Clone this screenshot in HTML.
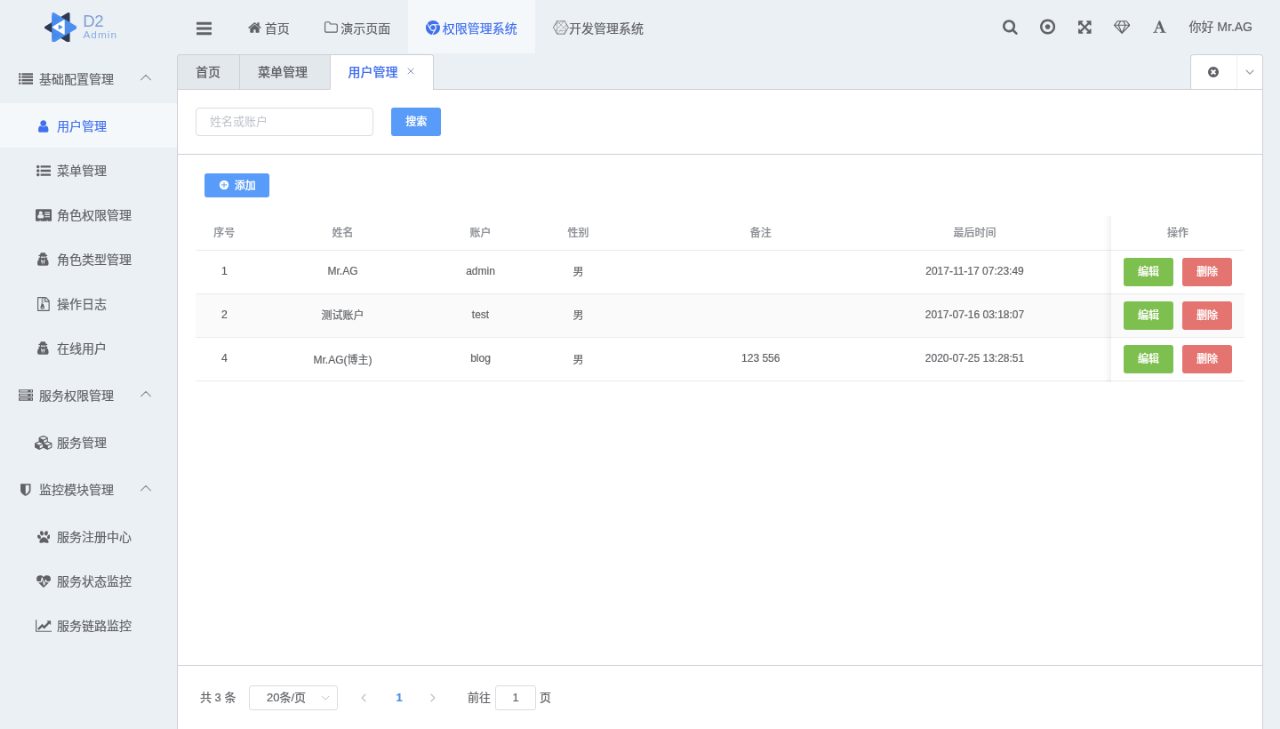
<!DOCTYPE html>
<html lang="zh-CN">
<head>
<meta charset="utf-8">
<title>D2Admin - 用户管理</title>
<style>
*{box-sizing:border-box}
html,body{margin:0;padding:0;width:1280px;height:729px;overflow:hidden;background:#ebf0f5}
body{position:relative}
#stage{position:absolute;left:0;top:0;width:1440px;height:820px;transform:scale(0.888889);transform-origin:0 0;font-family:"Liberation Sans","Noto Sans CJK SC",sans-serif;font-size:14px;color:#606266;overflow:hidden;will-change:transform;filter:blur(0.35px)}
svg.fa{display:inline-block;fill:currentColor;vertical-align:-0.143em;flex:none}
svg.chev,svg.x{display:inline-block;flex:none}
ul{list-style:none;margin:0;padding:0}
/* header */
.hd{position:absolute;left:0;top:0;width:1440px;height:60px}
.logo{position:absolute;left:0;top:0;width:200px;height:60px}
.logo-mark{position:absolute;left:49.5px;top:13.6px;width:36.9px;height:33.8px}
.logo-d2{position:absolute;left:93.3px;top:13px;font-size:18.6px;line-height:21px;color:#7f9fd3;letter-spacing:-0.45px}
.logo-admin{position:absolute;left:93.5px;top:32px;font-size:11.8px;line-height:14px;color:#8aace0;letter-spacing:1px}
.toggle{position:absolute;left:199.5px;top:0;width:60px;height:60px;display:flex;align-items:center;justify-content:center;color:#606266}
.toggle svg{margin-top:4px}
.hmenu{position:absolute;left:260.5px;top:0;height:60px;display:flex}
.hi{height:60px;line-height:60px;padding:3px 20px 0;font-size:14px;color:#606266;white-space:nowrap;display:flex;align-items:center}
.hi svg{margin-right:2.5px;position:relative;top:-0.5px}
.hi svg.nm{margin-right:0.4px}
.hi svg.sl{margin-left:-1.2px;margin-right:3.7px}
.hi.on{color:#4070ee;background:rgba(255,255,255,.5)}
.hr{position:absolute;right:19px;top:0;height:60px;display:flex;align-items:center;color:#606266}
.hb{display:flex;align-items:center;justify-content:center;width:42px;height:46px}
.hu{padding:14px 12px;font-size:14px;line-height:18px;white-space:nowrap}
/* aside */
.as{position:absolute;left:0;top:60px;width:200px;bottom:0}
.st,.si{position:relative;font-size:14px;color:#606266;white-space:nowrap}
.st{height:56px;line-height:56px;padding:1.3px 0 0 20px}
.si{height:50px;line-height:50px;padding:1.3px 0 0 40px}
.st i,.si i{display:inline-flex;justify-content:center;width:18px;margin-right:2px;font-style:normal;line-height:1;position:relative;top:0.6px;vertical-align:-0.143em}
.st i svg,.si i svg{vertical-align:top}
.si.on{color:#4070ee;background:rgba(255,255,255,.5)}
.st .arr{position:absolute;left:157px;top:20px;color:#8a8d94}
/* main */
.main{position:absolute;left:199px;top:60px;right:0;bottom:0}
.tabs{position:absolute;left:0;top:0;right:19.4px;height:41px;border-bottom:1px solid #cdd0d6}
.tnav{position:absolute;left:0;top:0.8px;height:40.2px;display:flex;border:1px solid #cdd0d6;border-bottom:none;border-radius:4px 4px 0 0;overflow:hidden}
.tab{height:39.2px;line-height:38px;padding:0 20px;font-size:14px;font-weight:500;color:#606266;background:rgba(0,0,0,.03);border-left:1px solid #cdd0d6;border-bottom:1px solid #cdd0d6;white-space:nowrap;display:flex;align-items:center}
.tab.first{border-left:none;padding-right:21px}
.tab.closable{padding-right:24.5px}
.tab.on{color:#4070ee;background:#fff;border-bottom-color:#fff}
.tab svg.x{color:#8494c4;position:relative;left:2px;top:-0.5px}
.tbtn{position:absolute;right:0;top:1px;height:39px;display:flex;background:#fff;border:1px solid #cdd0d6;border-bottom:none;border-radius:4px 4px 0 0;color:#606266}
.tb1{width:52.5px;height:38px;padding-right:0.8px;display:flex;align-items:center;justify-content:center;border-right:1px solid #ebeef5}
.tb2{width:27.2px;height:38px;padding:0.8px 1px 0 0;display:flex;align-items:center;justify-content:center;color:#9a9da3}
.box{position:absolute;left:0;top:41px;right:18.8px;bottom:0;background:#fff;border-left:1px solid #cdd0d6;border-right:1px solid #cdd0d6}
.bh{position:absolute;left:0;top:0;right:0;height:73px;border-bottom:1px solid #cdd0d6}
.inp{position:absolute;left:20.1px;top:20px;width:200px;height:32px;line-height:30px;border:1px solid #dcdde2;border-radius:4px;padding:0 15px;font-size:13px;color:#c0c4cc;background:#fff}
.btn{display:inline-flex;align-items:center;justify-content:center;color:#fff;font-weight:500;border-radius:3px;font-size:12px;line-height:1;white-space:nowrap}
.btn.pri{background:#589bf8}
.btn.ok{background:#7ec050}
.btn.no{background:#e47470}
.btn.sm{position:absolute;left:240.3px;top:20px;width:56px;height:32px}
.btn.mini{width:73px;height:27.6px}
.btn.mini svg.pc{width:12px;height:12px;margin-right:5.4px;flex:none;position:relative;top:-0.2px}
.btn.mini span{position:relative;top:0.9px;left:0.3px}
.bb{position:absolute;left:0;top:73px;right:0;bottom:73px}
.addrow{position:absolute;left:30.3px;top:20.8px}
.tbl{position:absolute;left:20px;top:67px;width:1180px;border-collapse:collapse;table-layout:fixed;font-size:12px;color:#606266}
.tbl th{height:40px;padding:0;font-weight:500;color:#909399;text-align:center;border-bottom:1px solid #ececef}
.tbl td{height:49.25px;padding:0;text-align:center;border-bottom:1px solid #ececef}
.tbl tr.r1 td{background:#fafafa}
.tbl .c0{width:65.5px;padding-right:1px !important}.tbl .c1{width:200px}.tbl .c2{width:110px}.tbl .c3{width:110px}.tbl .c4{width:300.5px}.tbl .c5{width:181px}.tbl .cx{width:63px}.tbl .c6{width:150px}
.tbl td>span.t{position:relative;top:-1px}
.tbl td .btn{width:56px;height:32px;vertical-align:middle;position:relative;top:0.3px}
.tbl td .btn+.btn{margin-left:10px}
.fixshadow{position:absolute;left:1041px;top:69px;width:9px;height:186.5px;background:linear-gradient(to right,rgba(0,0,0,0),rgba(0,0,0,.02) 45%,rgba(0,0,0,.055))}
.bf{position:absolute;left:0;bottom:0;right:0;height:72px;border-top:1px solid #cdd0d6;font-size:13px;color:#606266}
.bf>span{position:absolute;top:22px;height:28px;line-height:28px;white-space:nowrap}
.pt{left:25px}
.ps{left:80px;width:100px;border:1px solid #dcdde2;border-radius:3px;text-align:center;padding-right:16px;line-height:26px !important}
.ps svg{position:absolute;right:7px;top:7px}
.pp{left:203px;width:12px;color:#c0c4cc;display:flex;align-items:center}
.pn{left:241px;width:16px;text-align:center;color:#4d8fe6;font-weight:700}
.px{left:281px;width:12px;color:#c0c4cc;display:flex;align-items:center}
.pj{left:326px}
.pe{display:inline-block;width:46px;height:28px;line-height:26px;border:1px solid #dcdde2;border-radius:3px;text-align:center;margin:0 4px 0 5px;vertical-align:top}

/* weight compensation for heavier source rendering */
.tab{-webkit-text-stroke:0.12px currentColor}
.btn,.tbl th{-webkit-text-stroke:0.22px currentColor}
.st,.si,.hi,.hu,.tbl td,.bf,.pt{-webkit-text-stroke:0.18px currentColor}

</style>
</head>
<body>
<div id="stage">
<div class="hd">
<div class="logo">
<svg class="logo-mark" viewBox="0 0 100 91.7" aria-hidden="true">
<polygon points="4.5,45.85 72.9,4.5 72.9,87.2" fill="#2e3a53" stroke="#2e3a53" stroke-width="9" stroke-linejoin="round"/>
<polygon points="95.5,45.85 27.1,4.5 27.1,87.2" fill="#4c8ff0" stroke="#4c8ff0" stroke-width="9" stroke-linejoin="round"/>
<polygon points="22.6,8 22.6,35 47,21.5" fill="#4489ec"/>
<polygon points="22.6,83.7 22.6,56.7 47,70.2" fill="#4489ec"/>
<polygon points="25,44.6 60,23.5 60,65.7" fill="#ffffff" stroke="#ffffff" stroke-width="3" stroke-linejoin="round"/>
<polygon points="43.5,38 43.5,51.2 55,44.6" fill="#4c8ff0" stroke="#4c8ff0" stroke-width="2" stroke-linejoin="round"/>
</svg>
<span class="logo-d2">D2</span><span class="logo-admin">Admin</span>
</div>
<div class="toggle"><svg class="fa " style="width:17.14px;height:20px;" viewBox="0 -1536 1536 1792" aria-hidden="true"><path transform="scale(1,-1)" d="M1536 192v-128q0 -26 -19 -45t-45 -19h-1408q-26 0 -45 19t-19 45v128q0 26 19 45t45 19h1408q26 0 45 -19t19 -45zM1536 704v-128q0 -26 -19 -45t-45 -19h-1408q-26 0 -45 19t-19 45v128q0 26 19 45t45 19h1408q26 0 45 -19t19 -45zM1536 1216v-128q0 -26 -19 -45
t-45 -19h-1408q-26 0 -45 19t-19 45v128q0 26 19 45t45 19h1408q26 0 45 -19t19 -45z"/></svg></div>
<ul class="hmenu">
<li class="hi"><svg class="fa sl" style="width:14.86px;height:16px;" viewBox="0 -1536 1664 1792" aria-hidden="true"><path transform="scale(1,-1)" d="M1408 544v-480q0 -26 -19 -45t-45 -19h-384v384h-256v-384h-384q-26 0 -45 19t-19 45v480q0 1 0.5 3t0.5 3l575 474l575 -474q1 -2 1 -6zM1631 613l-62 -74q-8 -9 -21 -11h-3q-13 0 -21 7l-692 577l-692 -577q-12 -8 -24 -7q-13 2 -21 11l-62 74q-8 10 -7 23.5t11 21.5
l719 599q32 26 76 26t76 -26l244 -204v195q0 14 9 23t23 9h192q14 0 23 -9t9 -23v-408l219 -182q10 -8 11 -21.5t-7 -23.5z"/></svg><span>首页</span></li>
<li class="hi"><svg class="fa sl" style="width:14.86px;height:16px;" viewBox="0 -1536 1664 1792" aria-hidden="true"><path transform="scale(1,-1)" d="M1536 224v704q0 40 -28 68t-68 28h-704q-40 0 -68 28t-28 68v64q0 40 -28 68t-68 28h-320q-40 0 -68 -28t-28 -68v-960q0 -40 28 -68t68 -28h1216q40 0 68 28t28 68zM1664 928v-704q0 -92 -66 -158t-158 -66h-1216q-92 0 -158 66t-66 158v960q0 92 66 158t158 66h320
q92 0 158 -66t66 -158v-32h672q92 0 158 -66t66 -158z"/></svg><span>演示页面</span></li>
<li class="hi on"><svg class="fa " style="width:16.00px;height:16px;" viewBox="0 -1536 1792 1792" aria-hidden="true"><path transform="scale(1,-1)" d="M893 1536q240 2 451 -120q232 -134 352 -372l-742 39q-160 9 -294 -74.5t-185 -229.5l-276 424q128 159 311 245.5t383 87.5zM146 1131l337 -663q72 -143 211 -217t293 -45l-230 -451q-212 33 -385 157.5t-272.5 316t-99.5 411.5q0 267 146 491zM1732 962
q58 -150 59.5 -310.5t-48.5 -306t-153 -272t-246 -209.5q-230 -133 -498 -119l405 623q88 131 82.5 290.5t-106.5 277.5zM896 942q125 0 213.5 -88.5t88.5 -213.5t-88.5 -213.5t-213.5 -88.5t-213.5 88.5t-88.5 213.5t88.5 213.5t213.5 88.5z"/></svg><span>权限管理系统</span></li>
<li class="hi"><svg class="fa nm" style="width:17.83px;height:15.6px;" viewBox="0 -1536 2048 1792" aria-hidden="true"><path transform="scale(1,-1)" d="M2048 641q0 -21 -13 -36.5t-33 -19.5l-205 -356q3 -9 3 -18q0 -20 -12.5 -35.5t-32.5 -19.5l-193 -337q3 -8 3 -16q0 -23 -16.5 -40t-40.5 -17q-25 0 -41 18h-400q-17 -20 -43 -20t-43 20h-399q-17 -20 -43 -20q-23 0 -40 16.5t-17 40.5q0 8 4 20l-193 335
q-20 4 -32.5 19.5t-12.5 35.5q0 9 3 18l-206 356q-20 5 -32.5 20.5t-12.5 35.5q0 21 13.5 36.5t33.5 19.5l199 344q0 1 -0.5 3t-0.5 3q0 36 34 51l209 363q-4 10 -4 18q0 24 17 40.5t40 16.5q26 0 44 -21h396q16 21 43 21t43 -21h398q18 21 44 21q23 0 40 -16.5t17 -40.5
q0 -6 -4 -18l207 -358q23 -1 39 -17.5t16 -38.5q0 -13 -7 -27l187 -324q19 -4 31.5 -19.5t12.5 -35.5zM1063 -158h389l-342 354h-143l-342 -354h360q18 16 39 16t39 -16zM112 654q1 -4 1 -13q0 -10 -2 -15l208 -360l15 -6l188 199v347l-187 194q-13 -8 -29 -10zM986 1438
h-388l190 -200l554 200h-280q-16 -16 -38 -16t-38 16zM1689 226q1 6 5 11l-64 68l-17 -79h76zM1583 226l22 105l-252 266l-296 -307l63 -64h463zM1495 -142l16 28l65 310h-427l333 -343q8 4 13 5zM578 -158h5l342 354h-373v-335l4 -6q14 -5 22 -13zM552 226h402l64 66
l-309 321l-157 -166v-221zM359 226h163v189l-168 -177q4 -8 5 -12zM358 1051q0 -1 0.5 -2t0.5 -2q0 -16 -8 -29l171 -177v269zM552 1121v-311l153 -157l297 314l-223 236zM556 1425l-4 -8v-264l205 74l-191 201q-6 -2 -10 -3zM1447 1438h-16l-621 -224l213 -225zM1023 946
l-297 -315l311 -319l296 307zM688 634l-136 141v-284zM1038 270l-42 -44h85zM1374 618l238 -251l132 624l-3 5l-1 1zM1718 1018q-8 13 -8 29v2l-216 376q-5 1 -13 5l-437 -463l310 -327zM522 1142v223l-163 -282zM522 196h-163l163 -283v283zM1607 196l-48 -227l130 227h-82
zM1729 266l207 361q-2 10 -2 14q0 1 3 16l-171 296l-129 -612l77 -82q5 3 15 7z"/></svg><span>开发管理系统</span></li>
</ul>
<div class="hr">
<span class="hb"><svg class="fa " style="width:16.71px;height:18px;" viewBox="0 -1536 1664 1792" aria-hidden="true"><path transform="scale(1,-1)" d="M1152 704q0 185 -131.5 316.5t-316.5 131.5t-316.5 -131.5t-131.5 -316.5t131.5 -316.5t316.5 -131.5t316.5 131.5t131.5 316.5zM1664 -128q0 -52 -38 -90t-90 -38q-54 0 -90 38l-343 342q-179 -124 -399 -124q-143 0 -273.5 55.5t-225 150t-150 225t-55.5 273.5
t55.5 273.5t150 225t225 150t273.5 55.5t273.5 -55.5t225 -150t150 -225t55.5 -273.5q0 -220 -124 -399l343 -343q37 -37 37 -90z"/></svg></span>
<span class="hb"><svg class="fa " style="width:17.14px;height:20px;" viewBox="0 -1536 1536 1792" aria-hidden="true"><path transform="scale(1,-1)" d="M1024 640q0 -106 -75 -181t-181 -75t-181 75t-75 181t75 181t181 75t181 -75t75 -181zM768 1184q-148 0 -273 -73t-198 -198t-73 -273t73 -273t198 -198t273 -73t273 73t198 198t73 273t-73 273t-198 198t-273 73zM1536 640q0 -209 -103 -385.5t-279.5 -279.5
t-385.5 -103t-385.5 103t-279.5 279.5t-103 385.5t103 385.5t279.5 279.5t385.5 103t385.5 -103t279.5 -279.5t103 -385.5z"/></svg></span>
<span class="hb"><svg class="fa " style="width:14.57px;height:17px;" viewBox="0 -1536 1536 1792" aria-hidden="true"><path transform="scale(1,-1)" d="M1283 995l-355 -355l355 -355l144 144q29 31 70 14q39 -17 39 -59v-448q0 -26 -19 -45t-45 -19h-448q-42 0 -59 40q-17 39 14 69l144 144l-355 355l-355 -355l144 -144q31 -30 14 -69q-17 -40 -59 -40h-448q-26 0 -45 19t-19 45v448q0 42 40 59q39 17 69 -14l144 -144
l355 355l-355 355l-144 -144q-19 -19 -45 -19q-12 0 -24 5q-40 17 -40 59v448q0 26 19 45t45 19h448q42 0 59 -40q17 -39 -14 -69l-144 -144l355 -355l355 355l-144 144q-31 30 -14 69q17 40 59 40h448q26 0 45 -19t19 -45v-448q0 -42 -39 -59q-13 -5 -25 -5q-26 0 -45 19z
"/></svg></span>
<span class="hb"><svg class="fa " style="width:18.29px;height:16px;" viewBox="0 -1536 2048 1792" aria-hidden="true"><path transform="scale(1,-1)" d="M212 768l623 -665l-300 665h-323zM1024 -4l349 772h-698zM538 896l204 384h-262l-288 -384h346zM1213 103l623 665h-323zM683 896h682l-204 384h-274zM1510 896h346l-288 384h-262zM1651 1382l384 -512q14 -18 13 -41.5t-17 -40.5l-960 -1024q-18 -20 -47 -20t-47 20
l-960 1024q-16 17 -17 40.5t13 41.5l384 512q18 26 51 26h1152q33 0 51 -26z"/></svg></span>
<span class="hb"><svg class="fa " style="width:14.86px;height:16px;" viewBox="0 -1536 1664 1792" aria-hidden="true"><path transform="scale(1,-1)" d="M725 977l-170 -450q33 0 136.5 -2t160.5 -2q19 0 57 2q-87 253 -184 452zM0 -128l2 79q23 7 56 12.5t57 10.5t49.5 14.5t44.5 29t31 50.5l237 616l280 724h75h53q8 -14 11 -21l205 -480q33 -78 106 -257.5t114 -274.5q15 -34 58 -144.5t72 -168.5q20 -45 35 -57
q19 -15 88 -29.5t84 -20.5q6 -38 6 -57q0 -5 -0.5 -13.5t-0.5 -12.5q-63 0 -190 8t-191 8q-76 0 -215 -7t-178 -8q0 43 4 78l131 28q1 0 12.5 2.5t15.5 3.5t14.5 4.5t15 6.5t11 8t9 11t2.5 14q0 16 -31 96.5t-72 177.5t-42 100l-450 2q-26 -58 -76.5 -195.5t-50.5 -162.5
q0 -22 14 -37.5t43.5 -24.5t48.5 -13.5t57 -8.5t41 -4q1 -19 1 -58q0 -9 -2 -27q-58 0 -174.5 10t-174.5 10q-8 0 -26.5 -4t-21.5 -4q-80 -14 -188 -14z"/></svg></span>
<span class="hu">你好 Mr.AG</span>
</div>
</div>
<div class="as">
<div class="st"><i><svg class="fa " style="width:16.00px;height:16px;" viewBox="0 -1536 1792 1792" aria-hidden="true"><path transform="scale(1,-1)" d="M256 224v-192q0 -13 -9.5 -22.5t-22.5 -9.5h-192q-13 0 -22.5 9.5t-9.5 22.5v192q0 13 9.5 22.5t22.5 9.5h192q13 0 22.5 -9.5t9.5 -22.5zM256 608v-192q0 -13 -9.5 -22.5t-22.5 -9.5h-192q-13 0 -22.5 9.5t-9.5 22.5v192q0 13 9.5 22.5t22.5 9.5h192q13 0 22.5 -9.5
t9.5 -22.5zM256 992v-192q0 -13 -9.5 -22.5t-22.5 -9.5h-192q-13 0 -22.5 9.5t-9.5 22.5v192q0 13 9.5 22.5t22.5 9.5h192q13 0 22.5 -9.5t9.5 -22.5zM1792 224v-192q0 -13 -9.5 -22.5t-22.5 -9.5h-1344q-13 0 -22.5 9.5t-9.5 22.5v192q0 13 9.5 22.5t22.5 9.5h1344
q13 0 22.5 -9.5t9.5 -22.5zM256 1376v-192q0 -13 -9.5 -22.5t-22.5 -9.5h-192q-13 0 -22.5 9.5t-9.5 22.5v192q0 13 9.5 22.5t22.5 9.5h192q13 0 22.5 -9.5t9.5 -22.5zM1792 608v-192q0 -13 -9.5 -22.5t-22.5 -9.5h-1344q-13 0 -22.5 9.5t-9.5 22.5v192q0 13 9.5 22.5
t22.5 9.5h1344q13 0 22.5 -9.5t9.5 -22.5zM1792 992v-192q0 -13 -9.5 -22.5t-22.5 -9.5h-1344q-13 0 -22.5 9.5t-9.5 22.5v192q0 13 9.5 22.5t22.5 9.5h1344q13 0 22.5 -9.5t9.5 -22.5zM1792 1376v-192q0 -13 -9.5 -22.5t-22.5 -9.5h-1344q-13 0 -22.5 9.5t-9.5 22.5v192
q0 13 9.5 22.5t22.5 9.5h1344q13 0 22.5 -9.5t9.5 -22.5z"/></svg></i> <span>基础配置管理</span><svg class="chev arr" style="width:14px;height:14px;" viewBox="0 0 12 12" aria-hidden="true"><polyline points="1.3,8.4 6,3.7 10.7,8.4" fill="none" stroke="currentColor" stroke-width="0.9" stroke-linecap="round" stroke-linejoin="round"/></svg></div>
<div class="si on"><i><svg class="fa " style="width:11.43px;height:16px;" viewBox="0 -1536 1280 1792" aria-hidden="true"><path transform="scale(1,-1)" d="M1280 137q0 -109 -62.5 -187t-150.5 -78h-854q-88 0 -150.5 78t-62.5 187q0 85 8.5 160.5t31.5 152t58.5 131t94 89t134.5 34.5q131 -128 313 -128t313 128q76 0 134.5 -34.5t94 -89t58.5 -131t31.5 -152t8.5 -160.5zM1024 1024q0 -159 -112.5 -271.5t-271.5 -112.5
t-271.5 112.5t-112.5 271.5t112.5 271.5t271.5 112.5t271.5 -112.5t112.5 -271.5z"/></svg></i> <span>用户管理</span></div>
<div class="si"><i><svg class="fa " style="width:16.00px;height:16px;" viewBox="0 -1536 1792 1792" aria-hidden="true"><path transform="scale(1,-1)" d="M384 128q0 -80 -56 -136t-136 -56t-136 56t-56 136t56 136t136 56t136 -56t56 -136zM384 640q0 -80 -56 -136t-136 -56t-136 56t-56 136t56 136t136 56t136 -56t56 -136zM1792 224v-192q0 -13 -9.5 -22.5t-22.5 -9.5h-1216q-13 0 -22.5 9.5t-9.5 22.5v192q0 13 9.5 22.5
t22.5 9.5h1216q13 0 22.5 -9.5t9.5 -22.5zM384 1152q0 -80 -56 -136t-136 -56t-136 56t-56 136t56 136t136 56t136 -56t56 -136zM1792 736v-192q0 -13 -9.5 -22.5t-22.5 -9.5h-1216q-13 0 -22.5 9.5t-9.5 22.5v192q0 13 9.5 22.5t22.5 9.5h1216q13 0 22.5 -9.5t9.5 -22.5z
M1792 1248v-192q0 -13 -9.5 -22.5t-22.5 -9.5h-1216q-13 0 -22.5 9.5t-9.5 22.5v192q0 13 9.5 22.5t22.5 9.5h1216q13 0 22.5 -9.5t9.5 -22.5z"/></svg></i> <span>菜单管理</span></div>
<div class="si"><i><svg class="fa " style="width:18.29px;height:16px;" viewBox="0 -1536 2048 1792" aria-hidden="true"><path transform="scale(1,-1)" d="M1024 405q0 64 -9 117.5t-29.5 103t-60.5 78t-97 28.5q-6 -4 -30 -18t-37.5 -21.5t-35.5 -17.5t-43 -14.5t-42 -4.5t-42 4.5t-43 14.5t-35.5 17.5t-37.5 21.5t-30 18q-57 0 -97 -28.5t-60.5 -78t-29.5 -103t-9 -117.5t37 -106.5t91 -42.5h512q54 0 91 42.5t37 106.5z
M867 925q0 94 -66.5 160.5t-160.5 66.5t-160.5 -66.5t-66.5 -160.5t66.5 -160.5t160.5 -66.5t160.5 66.5t66.5 160.5zM1792 416v64q0 14 -9 23t-23 9h-576q-14 0 -23 -9t-9 -23v-64q0 -14 9 -23t23 -9h576q14 0 23 9t9 23zM1792 676v56q0 15 -10.5 25.5t-25.5 10.5h-568
q-15 0 -25.5 -10.5t-10.5 -25.5v-56q0 -15 10.5 -25.5t25.5 -10.5h568q15 0 25.5 10.5t10.5 25.5zM1792 928v64q0 14 -9 23t-23 9h-576q-14 0 -23 -9t-9 -23v-64q0 -14 9 -23t23 -9h576q14 0 23 9t9 23zM2048 1248v-1216q0 -66 -47 -113t-113 -47h-352v96q0 14 -9 23t-23 9
h-64q-14 0 -23 -9t-9 -23v-96h-768v96q0 14 -9 23t-23 9h-64q-14 0 -23 -9t-9 -23v-96h-352q-66 0 -113 47t-47 113v1216q0 66 47 113t113 47h1728q66 0 113 -47t47 -113z"/></svg></i> <span>角色权限管理</span></div>
<div class="si"><i><svg class="fa " style="width:13.71px;height:16px;" viewBox="0 -1536 1536 1792" aria-hidden="true"><path transform="scale(1,-1)" d="M576 0l96 448l-96 128l-128 64zM832 0l128 640l-128 -64l-96 -128zM992 1010q-2 4 -4 6q-10 8 -96 8q-70 0 -167 -19q-7 -2 -21 -2t-21 2q-97 19 -167 19q-86 0 -96 -8q-2 -2 -4 -6q2 -18 4 -27q2 -3 7.5 -6.5t7.5 -10.5q2 -4 7.5 -20.5t7 -20.5t7.5 -17t8.5 -17t9 -14
t12 -13.5t14 -9.5t17.5 -8t20.5 -4t24.5 -2q36 0 59 12.5t32.5 30t14.5 34.5t11.5 29.5t17.5 12.5h12q11 0 17.5 -12.5t11.5 -29.5t14.5 -34.5t32.5 -30t59 -12.5q13 0 24.5 2t20.5 4t17.5 8t14 9.5t12 13.5t9 14t8.5 17t7.5 17t7 20.5t7.5 20.5q2 7 7.5 10.5t7.5 6.5
q2 9 4 27zM1408 131q0 -121 -73 -190t-194 -69h-874q-121 0 -194 69t-73 190q0 61 4.5 118t19 125.5t37.5 123.5t63.5 103.5t93.5 74.5l-90 220h214q-22 64 -22 128q0 12 2 32q-194 40 -194 96q0 57 210 99q17 62 51.5 134t70.5 114q32 37 76 37q30 0 84 -31t84 -31t84 31
t84 31q44 0 76 -37q36 -42 70.5 -114t51.5 -134q210 -42 210 -99q0 -56 -194 -96q7 -81 -20 -160h214l-82 -225q63 -33 107.5 -96.5t65.5 -143.5t29 -151.5t8 -148.5z"/></svg></i> <span>角色类型管理</span></div>
<div class="si"><i><svg class="fa " style="width:13.71px;height:16px;" viewBox="0 -1536 1536 1792" aria-hidden="true"><path transform="scale(1,-1)" d="M640 1152v128h-128v-128h128zM768 1024v128h-128v-128h128zM640 896v128h-128v-128h128zM768 768v128h-128v-128h128zM1468 1156q28 -28 48 -76t20 -88v-1152q0 -40 -28 -68t-68 -28h-1344q-40 0 -68 28t-28 68v1600q0 40 28 68t68 28h896q40 0 88 -20t76 -48zM1024 1400
v-376h376q-10 29 -22 41l-313 313q-12 12 -41 22zM1408 -128v1024h-416q-40 0 -68 28t-28 68v416h-128v-128h-128v128h-512v-1536h1280zM781 593l107 -349q8 -27 8 -52q0 -83 -72.5 -137.5t-183.5 -54.5t-183.5 54.5t-72.5 137.5q0 25 8 52q21 63 120 396v128h128v-128h79
q22 0 39 -13t23 -34zM640 128q53 0 90.5 19t37.5 45t-37.5 45t-90.5 19t-90.5 -19t-37.5 -45t37.5 -45t90.5 -19z"/></svg></i> <span>操作日志</span></div>
<div class="si"><i><svg class="fa " style="width:13.71px;height:16px;" viewBox="0 -1536 1536 1792" aria-hidden="true"><path transform="scale(1,-1)" d="M576 0l96 448l-96 128l-128 64zM832 0l128 640l-128 -64l-96 -128zM992 1010q-2 4 -4 6q-10 8 -96 8q-70 0 -167 -19q-7 -2 -21 -2t-21 2q-97 19 -167 19q-86 0 -96 -8q-2 -2 -4 -6q2 -18 4 -27q2 -3 7.5 -6.5t7.5 -10.5q2 -4 7.5 -20.5t7 -20.5t7.5 -17t8.5 -17t9 -14
t12 -13.5t14 -9.5t17.5 -8t20.5 -4t24.5 -2q36 0 59 12.5t32.5 30t14.5 34.5t11.5 29.5t17.5 12.5h12q11 0 17.5 -12.5t11.5 -29.5t14.5 -34.5t32.5 -30t59 -12.5q13 0 24.5 2t20.5 4t17.5 8t14 9.5t12 13.5t9 14t8.5 17t7.5 17t7 20.5t7.5 20.5q2 7 7.5 10.5t7.5 6.5
q2 9 4 27zM1408 131q0 -121 -73 -190t-194 -69h-874q-121 0 -194 69t-73 190q0 61 4.5 118t19 125.5t37.5 123.5t63.5 103.5t93.5 74.5l-90 220h214q-22 64 -22 128q0 12 2 32q-194 40 -194 96q0 57 210 99q17 62 51.5 134t70.5 114q32 37 76 37q30 0 84 -31t84 -31t84 31
t84 31q44 0 76 -37q36 -42 70.5 -114t51.5 -134q210 -42 210 -99q0 -56 -194 -96q7 -81 -20 -160h214l-82 -225q63 -33 107.5 -96.5t65.5 -143.5t29 -151.5t8 -148.5z"/></svg></i> <span>在线用户</span></div>
<div class="st"><i><svg class="fa " style="width:16.00px;height:16px;" viewBox="0 -1536 1792 1792" aria-hidden="true"><path transform="scale(1,-1)" d="M128 128h1024v128h-1024v-128zM128 640h1024v128h-1024v-128zM1696 192q0 40 -28 68t-68 28t-68 -28t-28 -68t28 -68t68 -28t68 28t28 68zM128 1152h1024v128h-1024v-128zM1696 704q0 40 -28 68t-68 28t-68 -28t-28 -68t28 -68t68 -28t68 28t28 68zM1696 1216
q0 40 -28 68t-68 28t-68 -28t-28 -68t28 -68t68 -28t68 28t28 68zM1792 384v-384h-1792v384h1792zM1792 896v-384h-1792v384h1792zM1792 1408v-384h-1792v384h1792z"/></svg></i> <span>服务权限管理</span><svg class="chev arr" style="width:14px;height:14px;" viewBox="0 0 12 12" aria-hidden="true"><polyline points="1.3,8.4 6,3.7 10.7,8.4" fill="none" stroke="currentColor" stroke-width="0.9" stroke-linecap="round" stroke-linejoin="round"/></svg></div>
<div class="si"><i><svg class="fa " style="width:20.57px;height:16px;" viewBox="0 -1536 2304 1792" aria-hidden="true"><path transform="scale(1,-1)" d="M640 -96l384 192v314l-384 -164v-342zM576 358l404 173l-404 173l-404 -173zM1664 -96l384 192v314l-384 -164v-342zM1600 358l404 173l-404 173l-404 -173zM1152 651l384 165v266l-384 -164v-267zM1088 1030l441 189l-441 189l-441 -189zM2176 512v-416q0 -36 -19 -67
t-52 -47l-448 -224q-25 -14 -57 -14t-57 14l-448 224q-4 2 -7 4q-2 -2 -7 -4l-448 -224q-25 -14 -57 -14t-57 14l-448 224q-33 16 -52 47t-19 67v416q0 38 21.5 70t56.5 48l434 186v400q0 38 21.5 70t56.5 48l448 192q23 10 50 10t50 -10l448 -192q35 -16 56.5 -48t21.5 -70
v-400l434 -186q36 -16 57 -48t21 -70z"/></svg></i> <span>服务管理</span></div>
<div class="st"><i><svg class="fa " style="width:11.43px;height:16px;" viewBox="0 -1536 1280 1792" aria-hidden="true"><path transform="scale(1,-1)" d="M1088 576v640h-448v-1137q119 63 213 137q235 184 235 360zM1280 1344v-768q0 -86 -33.5 -170.5t-83 -150t-118 -127.5t-126.5 -103t-121 -77.5t-89.5 -49.5t-42.5 -20q-12 -6 -26 -6t-26 6q-16 7 -42.5 20t-89.5 49.5t-121 77.5t-126.5 103t-118 127.5t-83 150
t-33.5 170.5v768q0 26 19 45t45 19h1152q26 0 45 -19t19 -45z"/></svg></i> <span>监控模块管理</span><svg class="chev arr" style="width:14px;height:14px;" viewBox="0 0 12 12" aria-hidden="true"><polyline points="1.3,8.4 6,3.7 10.7,8.4" fill="none" stroke="currentColor" stroke-width="0.9" stroke-linecap="round" stroke-linejoin="round"/></svg></div>
<div class="si"><i><svg class="fa " style="width:14.86px;height:16px;" viewBox="0 -1536 1664 1792" aria-hidden="true"><path transform="scale(1,-1)" d="M780 1064q0 -60 -19 -113.5t-63 -92.5t-105 -39q-76 0 -138 57.5t-92 135.5t-30 151q0 60 19 113.5t63 92.5t105 39q77 0 138.5 -57.5t91.5 -135t30 -151.5zM438 581q0 -80 -42 -139t-119 -59q-76 0 -141.5 55.5t-100.5 133.5t-35 152q0 80 42 139.5t119 59.5
q76 0 141.5 -55.5t100.5 -134t35 -152.5zM832 608q118 0 255 -97.5t229 -237t92 -254.5q0 -46 -17 -76.5t-48.5 -45t-64.5 -20t-76 -5.5q-68 0 -187.5 45t-182.5 45q-66 0 -192.5 -44.5t-200.5 -44.5q-183 0 -183 146q0 86 56 191.5t139.5 192.5t187.5 146t193 59zM1071 819
q-61 0 -105 39t-63 92.5t-19 113.5q0 74 30 151.5t91.5 135t138.5 57.5q61 0 105 -39t63 -92.5t19 -113.5q0 -73 -30 -151t-92 -135.5t-138 -57.5zM1503 923q77 0 119 -59.5t42 -139.5q0 -74 -35 -152t-100.5 -133.5t-141.5 -55.5q-77 0 -119 59t-42 139q0 74 35 152.5
t100.5 134t141.5 55.5z"/></svg></i> <span>服务注册中心</span></div>
<div class="si"><i><svg class="fa " style="width:16.00px;height:16px;" viewBox="0 -1536 1792 1792" aria-hidden="true"><path transform="scale(1,-1)" d="M1280 512h305q-5 -6 -10 -10.5t-9 -7.5l-3 -4l-623 -600q-18 -18 -44 -18t-44 18l-624 602q-5 2 -21 20h369q22 0 39.5 13.5t22.5 34.5l70 281l190 -667q6 -20 23 -33t39 -13q21 0 38 13t23 33l146 485l56 -112q18 -35 57 -35zM1792 940q0 -145 -103 -300h-369l-111 221
q-8 17 -25.5 27t-36.5 8q-45 -5 -56 -46l-129 -430l-196 686q-6 20 -23.5 33t-39.5 13t-39 -13.5t-22 -34.5l-116 -464h-423q-103 155 -103 300q0 220 127 344t351 124q62 0 126.5 -21.5t120 -58t95.5 -68.5t76 -68q36 36 76 68t95.5 68.5t120 58t126.5 21.5q224 0 351 -124
t127 -344z"/></svg></i> <span>服务状态监控</span></div>
<div class="si"><i><svg class="fa " style="width:18.29px;height:16px;" viewBox="0 -1536 2048 1792" aria-hidden="true"><path transform="scale(1,-1)" d="M2048 0v-128h-2048v1536h128v-1408h1920zM1920 1248v-435q0 -21 -19.5 -29.5t-35.5 7.5l-121 121l-633 -633q-10 -10 -23 -10t-23 10l-233 233l-416 -416l-192 192l585 585q10 10 23 10t23 -10l233 -233l464 464l-121 121q-16 16 -7.5 35.5t29.5 19.5h435q14 0 23 -9
t9 -23z"/></svg></i> <span>服务链路监控</span></div>
</div>
<div class="main">
<div class="tabs">
<div class="tnav">
<div class="tab first">首页</div>
<div class="tab closable">菜单管理</div>
<div class="tab on">用户管理<svg class="x" style="width:14px;height:14px;margin-left:5px" viewBox="0 0 14 14" aria-hidden="true"><path d="M4 4 L10 10 M10 4 L4 10" fill="none" stroke="currentColor" stroke-width="1" stroke-linecap="round"/></svg></div>
</div>
<div class="tbtn"><span class="tb1"><svg class="fa " style="width:12.00px;height:14px;" viewBox="0 -1536 1536 1792" aria-hidden="true"><path transform="scale(1,-1)" d="M1149 414q0 26 -19 45l-181 181l181 181q19 19 19 45q0 27 -19 46l-90 90q-19 19 -46 19q-26 0 -45 -19l-181 -181l-181 181q-19 19 -45 19q-27 0 -46 -19l-90 -90q-19 -19 -19 -46q0 -26 19 -45l181 -181l-181 -181q-19 -19 -19 -45q0 -27 19 -46l90 -90q19 -19 46 -19
q26 0 45 19l181 181l181 -181q19 -19 45 -19q27 0 46 19l90 90q19 19 19 46zM1536 640q0 -209 -103 -385.5t-279.5 -279.5t-385.5 -103t-385.5 103t-279.5 279.5t-103 385.5t103 385.5t279.5 279.5t385.5 103t385.5 -103t279.5 -279.5t103 -385.5z"/></svg></span><span class="tb2"><svg class="chev " style="width:12px;height:12px;" viewBox="0 0 12 12" aria-hidden="true"><polyline points="2.2,4.3 6,8.1 9.8,4.3" fill="none" stroke="currentColor" stroke-width="1.3" stroke-linecap="round" stroke-linejoin="round"/></svg></span></div>
</div>
<div class="box">
<div class="bh"><div class="inp">姓名或账户</div><span class="btn pri sm">搜索</span></div>
<div class="bb">
<div class="addrow"><span class="btn pri mini"><svg class="pc" viewBox="0 0 12 12" aria-hidden="true"><circle cx="6" cy="6" r="5.25" fill="#fff"/><path d="M6 3.3V8.7M3.3 6H8.7" fill="none" stroke="#589bf8" stroke-width="0.95" stroke-linecap="round"/></svg><span>添加</span></span></div>
<table class="tbl"><thead><tr><th class="c0">序号</th><th class="c1">姓名</th><th class="c2">账户</th><th class="c3">性别</th><th class="c4">备注</th><th class="c5">最后时间</th><th class="cx"></th><th class="c6">操作</th></tr></thead><tbody><tr class="r0"><td class="c0"><span class="t">1</span></td><td class="c1"><span class="t">Mr.AG</span></td><td class="c2"><span class="t">admin</span></td><td class="c3"><span class="t">男</span></td><td class="c4"><span class="t"></span></td><td class="c5"><span class="t">2017-11-17 07:23:49</span></td><td class="cx"></td><td class="c6"><span class="btn ok">编辑</span><span class="btn no">删除</span></td></tr><tr class="r1"><td class="c0"><span class="t">2</span></td><td class="c1"><span class="t">测试账户</span></td><td class="c2"><span class="t">test</span></td><td class="c3"><span class="t">男</span></td><td class="c4"><span class="t"></span></td><td class="c5"><span class="t">2017-07-16 03:18:07</span></td><td class="cx"></td><td class="c6"><span class="btn ok">编辑</span><span class="btn no">删除</span></td></tr><tr class="r2"><td class="c0"><span class="t">4</span></td><td class="c1"><span class="t">Mr.AG(博主)</span></td><td class="c2"><span class="t">blog</span></td><td class="c3"><span class="t">男</span></td><td class="c4"><span class="t">123 556</span></td><td class="c5"><span class="t">2020-07-25 13:28:51</span></td><td class="cx"></td><td class="c6"><span class="btn ok">编辑</span><span class="btn no">删除</span></td></tr></tbody></table>
<div class="fixshadow"></div>
</div>
<div class="bf">
<span class="pt">共 3 条</span>
<span class="ps"><span>20条/页</span><svg class="chev " style="width:12px;height:12px;color:#c0c4cc" viewBox="0 0 12 12" aria-hidden="true"><polyline points="2.2,4.3 6,8.1 9.8,4.3" fill="none" stroke="currentColor" stroke-width="1.0" stroke-linecap="round" stroke-linejoin="round"/></svg></span>
<span class="pp"><svg class="chev " style="width:12px;height:12px;" viewBox="0 0 12 12" aria-hidden="true"><polyline points="7.9,2.2 4.1,6 7.9,9.8" fill="none" stroke="currentColor" stroke-width="1.3" stroke-linecap="round" stroke-linejoin="round"/></svg></span>
<span class="pn">1</span>
<span class="px"><svg class="chev " style="width:12px;height:12px;" viewBox="0 0 12 12" aria-hidden="true"><polyline points="4.1,2.2 7.9,6 4.1,9.8" fill="none" stroke="currentColor" stroke-width="1.3" stroke-linecap="round" stroke-linejoin="round"/></svg></span>
<span class="pj">前往<span class="pe">1</span>页</span>
</div>
</div>
</div>
</div>
</body>
</html>
